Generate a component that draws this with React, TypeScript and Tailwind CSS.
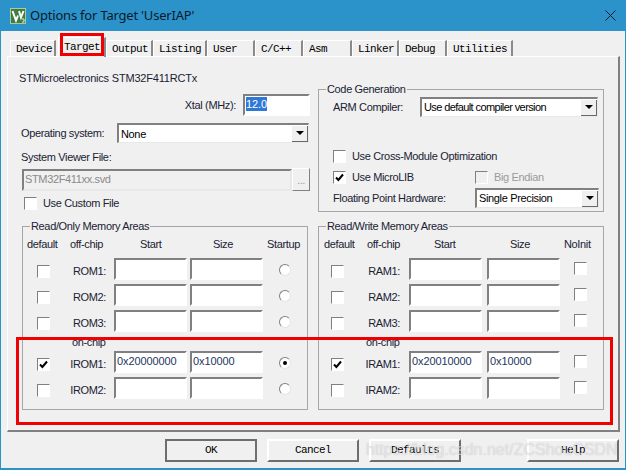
const sans = "font-['Liberation_Sans',Arial,sans-serif]";
const mono = "font-['Liberation_Mono','DejaVu_Sans_Mono',monospace]";
const ink = "text-[#1a2233]";
const label = "text-[11px] tracking-[-0.35px]";

const tabs = [
  { label: "Device", w: "w-[46px] mr-[2px]" },
  { label: "Target", w: "w-[48px]", active: true },
  { label: "Output", w: "w-[47px]" },
  { label: "Listing", w: "w-[54px]" },
  { label: "User", w: "w-[48px]" },
  { label: "C/C++", w: "w-[48px]" },
  { label: "Asm", w: "w-[49px]" },
  { label: "Linker", w: "w-[47px]" },
  { label: "Debug", w: "w-[48px]" },
  { label: "Utilities", w: "w-[66px]" },
];

function Sunken({ className = "", children }: { className?: string; children?: React.ReactNode }) {
  return (
    <div
      className={`box-border border-2 border-t-[#808080] border-l-[#808080] border-r-white border-b-white bg-white h-[22px] pl-px text-[11px] leading-[16px] tracking-[-0.1px] text-[#1c3560] ${className}`}
    >
      {children}
    </div>
  );
}

function Check({ checked, disabled, className = "" }: { checked?: boolean; disabled?: boolean; className?: string }) {
  return (
    <div
      className={`box-border w-[13px] h-[13px] shrink-0 border border-t-[#808080] border-l-[#808080] border-r-white border-b-white flex items-center justify-center ${disabled ? "bg-[#f0f0f0]" : "bg-white"} ${className}`}
    >
      {checked && (
        <svg width="9" height="9" viewBox="0 0 9 9">
          <path d="M1 4.5 L3.4 7 L8 1.5" fill="none" stroke="#000" strokeWidth="2" />
        </svg>
      )}
    </div>
  );
}

function Radio({ on }: { on?: boolean }) {
  return (
    <div className="box-border w-[12px] h-[12px] mt-[2px] rounded-full bg-white border border-t-[#808080] border-l-[#808080] border-r-[#e4e4e4] border-b-[#e4e4e4] flex items-center justify-center">
      {on && <div className="w-[4px] h-[4px] rounded-full bg-black" />}
    </div>
  );
}

function Select({ value, className = "", textClass = "tracking-[-0.35px]" }: { value: string; className?: string; textClass?: string }) {
  return (
    <div
      className={`box-border flex items-center justify-between border border-t-2 border-l-2 border-t-[#808080] border-l-[#808080] border-r-[#e8e8e8] border-b-[#e8e8e8] bg-white h-[20px] pl-[2px] text-[11px] text-black ${className}`}
    >
      <span className={textClass}>{value}</span>
      <div className="box-border w-[16px] h-[16px] bg-[#f0f0f0] border-r border-b border-[#696969] flex items-center justify-center">
        <div className="w-0 h-0 border-x-[4px] border-x-transparent border-t-[4px] border-t-black" />
      </div>
    </div>
  );
}

function GroupBox({ title, className = "", children }: { title: string; className?: string; children?: React.ReactNode }) {
  return (
    <div className={`relative box-border border border-[#a6a6a6] ${className}`}>
      <span className={`absolute left-[7px] -top-[8px] bg-[#f0f0f0] px-px leading-[14px] ${label} ${ink}`}>{title}</span>
      {children}
    </div>
  );
}

function MemRow({
  name,
  checked,
  start,
  size,
  last,
  labelW,
  sizeGap,
  lastW,
}: {
  name: string;
  checked?: boolean;
  start?: string;
  size?: string;
  last: React.ReactNode;
  labelW: string;
  sizeGap: string;
  lastW: string;
}) {
  return (
    <div className="flex items-center h-[22px]">
      <Check checked={checked} className="mt-[4px]" />
      <div className={`${labelW} mt-[4px] text-right ${label} ${ink}`}>{name}</div>
      <Sunken className="w-[73px]">{start}</Sunken>
      <Sunken className={`w-[73px] ${sizeGap}`}>{size}</Sunken>
      <div className={`${lastW} flex justify-center`}>{last}</div>
    </div>
  );
}

function MemGroup({
  title,
  kind,
  headers,
  start1,
  last,
  boxPad,
  onChipPad,
  labelW,
  sizeGap,
  lastW,
}: {
  title: string;
  kind: string;
  headers: { t: string; w: string }[];
  start1: string;
  last: (i: number) => React.ReactNode;
  boxPad: string;
  onChipPad: string;
  labelW: string;
  sizeGap: string;
  lastW: string;
}) {
  const row = { labelW, sizeGap, lastW };
  return (
    <GroupBox title={title} className="w-[286px] h-[184px]">
      <div className={`flex h-[31px] pt-[10px] leading-[14px] ${label} ${ink}`}>
        {headers.map((h) => (
          <span key={h.t} className={h.w}>
            {h.t}
          </span>
        ))}
      </div>
      <div className={boxPad}>
        <div className="flex flex-col gap-[4px]">
          <MemRow {...row} name={`${kind}1:`} last={last(0)} />
          <MemRow {...row} name={`${kind}2:`} last={last(1)} />
          <MemRow {...row} name={`${kind}3:`} last={last(2)} />
        </div>
      </div>
      <div className={`h-[19px] pt-px leading-[18px] ${label} ${ink} ${onChipPad}`}>on-chip</div>
      <div className={boxPad}>
        <div className="flex flex-col gap-[4px]">
          <MemRow {...row} name={`I${kind}1:`} checked start={start1} size="0x10000" last={last(3)} />
          <MemRow {...row} name={`I${kind}2:`} last={last(4)} />
        </div>
      </div>
    </GroupBox>
  );
}

function Button({ label, isDefault, className = "" }: { label: string; isDefault?: boolean; className?: string }) {
  return (
    <div
      className={`box-border w-[92px] h-[23px] flex items-center justify-center border-2 ${isDefault ? "border-[#6e6e6e]" : "border-t-white border-l-white border-r-[#6e6e6e] border-b-[#6e6e6e]"} text-[11px] tracking-[-0.6px] text-black ${mono} ${className}`}
    >
      {label}
    </div>
  );
}

export default function App() {
  return (
    <div className={`relative w-[626px] h-[470px] overflow-hidden bg-[#2b93c9] flex flex-col ${sans}`}>
      <div className="h-[31px] shrink-0 flex items-center pl-[10px] pr-[6px]">
        <svg width="16" height="16" viewBox="0 0 16 16">
          <rect x="0" y="0" width="16" height="16" fill="#3f7d43" />
          <rect x="0.5" y="0.5" width="15" height="15" fill="none" stroke="#a8c9a4" />
          <path d="M2.5 3 L6 12.5 L8 7.5 M9 3 L11 9.5 L13.5 3" fill="none" stroke="#fff" strokeWidth="2" />
          <path d="M12 11 h2 v3 h-2" fill="none" stroke="#dfeedd" strokeWidth="1" />
        </svg>
        <span className="ml-[4px] text-[13px] tracking-[-0.2px] text-[#0b1a2a] font-['Noto_Sans',sans-serif]">
          Options for Target 'UserIAP'
        </span>
        <svg className="ml-auto mr-[4px]" width="11" height="11" viewBox="0 0 11 11">
          <path d="M0.5 0.5 L10.5 10.5 M10.5 0.5 L0.5 10.5" stroke="#0b1a2a" strokeWidth="1" />
        </svg>
      </div>

      <div className="flex-1 mx-px mb-[2px] bg-[#f0f0f0] flex flex-col">
        <div className={`flex h-[25px] pl-[9px] items-end text-[11px] leading-[14px] tracking-[-0.6px] text-black ${mono}`}>
          {tabs.map((t) => (
            <div
              key={t.label}
              className={`box-border ${t.w} pl-[5px] border-t border-l border-white border-r-2 border-r-[#8a8a8a] ${
                t.active ? "h-[20px] pt-[2px] -mb-px relative z-10 bg-[#f0f0f0]" : "h-[16px] pt-px bg-[#f0f0f0]"
              }`}
            >
              {t.label}
            </div>
          ))}
        </div>

        <div className="box-border ml-[6px] w-[613px] h-[376px] border-t border-l border-white border-r-2 border-b-2 border-r-[#808080] border-b-[#808080] flex flex-col pl-[14px]">
          <div className="flex h-[169px]">
            <div className={`w-[296px] shrink-0 leading-[14px] ${label} ${ink}`}>
              <div className="mt-[14px] -ml-[3px] tracking-[-0.2px]">STMicroelectronics STM32F411RCTx</div>
              <div className="flex items-center justify-end mt-[9px] h-[22px] pr-[8px]">
                <span className="mr-[7px]">Xtal (MHz):</span>
                <Sunken className="w-[67px]">
                  <span className="inline-block bg-[#3078d8] text-white leading-[14px]">12.0</span>
                </Sunken>
              </div>
              <div className="flex items-center mt-[7px] -ml-px">
                <span className="w-[96px]">Operating system:</span>
                <Select value="None" className="w-[192px]" />
              </div>
              <div className="mt-[7px] -ml-px">System Viewer File:</div>
              <div className="flex mt-[4px]">
                <div className="box-border w-[270px] h-[22px] mt-px border-2 border-t-[#808080] border-l-[#808080] border-r-[#e8e8e8] border-b-[#e8e8e8] bg-[#f0f0f0] pl-px leading-[17px] text-[#8a8a8a]">
                  STM32F411xx.svd
                </div>
                <div className="box-border w-[18px] h-[23px] border border-t-white border-l-white border-r-[#808080] border-b-[#808080] text-center text-[#9a9a9a] leading-[22px]">
                  ...
                </div>
              </div>
              <div className="flex items-center mt-[5px] ml-[2px]">
                <Check />
                <span className="ml-[6px]">Use Custom File</span>
              </div>
            </div>

            <GroupBox title="Code Generation" className="w-[286px] h-[123px] mt-[32px]">
              <div className={`flex items-center pl-[14px] pt-[7px] ${label} ${ink}`}>
                <span className="w-[87px]">ARM Compiler:</span>
                <Select value="Use default compiler version" className="w-[178px]" textClass="tracking-[-0.6px]" />
              </div>
              <div className={`flex items-center pl-[14px] mt-[33px] h-[13px] ${label} ${ink}`}>
                <Check />
                <span className="ml-[6px]">Use Cross-Module Optimization</span>
              </div>
              <div className={`flex items-center pl-[14px] mt-[8px] h-[13px] ${label} ${ink}`}>
                <Check checked />
                <span className="ml-[6px] w-[123px]">Use MicroLIB</span>
                <Check disabled />
                <span className="ml-[6px] text-[#9a9a9a]">Big Endian</span>
              </div>
              <div className={`flex items-center pl-[14px] mt-[4px] ${label} ${ink}`}>
                <span className="w-[142px]">Floating Point Hardware:</span>
                <Select value="Single Precision" className="w-[124px]" />
              </div>
            </GroupBox>
          </div>

          <div className="flex gap-[10px]">
            <MemGroup
              title="Read/Only Memory Areas"
              kind="ROM"
              headers={[
                { t: "default", w: "ml-[4px] w-[43px]" },
                { t: "off-chip", w: "w-[70px]" },
                { t: "Start", w: "w-[73px]" },
                { t: "Size", w: "w-[54px]" },
                { t: "Startup", w: "" },
              ]}
              start1="0x20000000"
              last={(i) => <Radio on={i === 3} />}
              boxPad="pl-[14px]"
              onChipPad="pl-[49px]"
              labelW="w-[56px] mr-[8px]"
              sizeGap="ml-[3px]"
              lastW="w-[44px]"
            />
            <MemGroup
              title="Read/Write Memory Areas"
              kind="RAM"
              headers={[
                { t: "default", w: "ml-[5px] w-[43px]" },
                { t: "off-chip", w: "w-[67px]" },
                { t: "Start", w: "w-[76px]" },
                { t: "Size", w: "w-[54px]" },
                { t: "NoInit", w: "" },
              ]}
              start1="0x20010000"
              last={() => <Check className="-mt-[2px]" />}
              boxPad="pl-[12px]"
              onChipPad="pl-[47px]"
              labelW="w-[56px] mr-[9px]"
              sizeGap="ml-[5px]"
              lastW="w-[40px]"
            />
          </div>
        </div>

        <div className="flex mt-[7px] pl-[164px]">
          <Button label="OK" isDefault />
          <Button label="Cancel" className="ml-[10px]" />
          <Button label="Defaults" className="ml-[10px]" />
          <Button label="Help" className="ml-[66px]" />
        </div>
      </div>

      <div className="absolute z-20 left-[60px] top-[33px] w-[44px] h-[23px] border-[3px] border-[#f00000]" />
      <div className="absolute z-20 left-[16px] top-[337px] w-[597px] h-[88px] border-[3px] border-[#f00000]" />
      <div className="absolute z-20 left-[366px] top-[441px] text-[16px] leading-[18px] whitespace-nowrap text-white/60 [text-shadow:0_0_1px_rgba(0,0,0,0.25)]">
        https://blog.csdn.net/ZCShouCSDN
      </div>
    </div>
  );
}
